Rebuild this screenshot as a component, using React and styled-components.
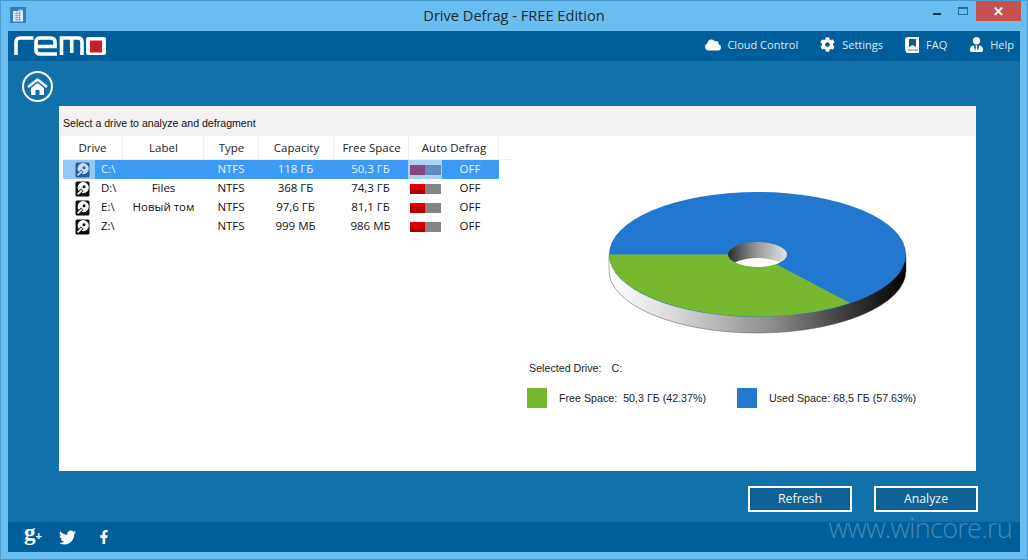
import React from "react";
import styled, { createGlobalStyle } from "styled-components";
import { FaCloud, FaCog, FaUserTie, FaTwitter, FaFacebookF } from "react-icons/fa";

const GlobalStyle = createGlobalStyle`
  html, body {
    margin: 0;
    padding: 0;
    background: #69bdf0;
  }
  * {
    box-sizing: border-box;
  }
  body {
    font-family: "Open Sans", "Noto Sans", sans-serif;
  }
`;

const Window = styled.div`
  position: relative;
  width: 1028px;
  height: 560px;
  overflow: hidden;
  background: #69bdf0;
  border: 1px solid #4a9bd0;
  display: flex;
  flex-direction: column;
`;

const TitleBar = styled.div`
  position: relative;
  height: 30px;
  flex: none;
  display: flex;
  align-items: center;
  justify-content: center;
  color: #1d2a35;
  font-size: 14.6px;
  padding-bottom: 2px;
`;

const AppIcon = styled.div`
  position: absolute;
  left: 9px;
  top: 6px;
  width: 16px;
  height: 16px;
  background: #2f7fc4;
  display: flex;
  align-items: center;
  justify-content: center;
`;

const WindowControls = styled.div`
  position: absolute;
  top: 0;
  right: 6px;
  display: flex;
  align-items: flex-start;
`;

const MinButton = styled.div`
  width: 8px;
  height: 2px;
  margin: 12px 17px 0 0;
  background: #12314a;
`;

const MaxButton = styled.div`
  width: 10px;
  height: 8px;
  margin: 6px 8px 0 0;
  border: 1px solid #2b6b9c;
  border-top-width: 2px;
`;

const CloseButton = styled.div`
  width: 45px;
  height: 20px;
  background: #c75050;
  color: #fff;
  font-size: 13px;
  font-weight: 700;
  display: flex;
  align-items: center;
  justify-content: center;
`;

const Shell = styled.div`
  flex: 1;
  margin: 0 7px 7px 7px;
  display: flex;
  flex-direction: column;
  min-height: 0;
`;

const Header = styled.header`
  height: 30px;
  flex: none;
  background: #005f9a;
  display: flex;
  align-items: center;
  justify-content: space-between;
  padding: 0 6px 0 6px;
`;

const Nav = styled.nav`
  display: flex;
  align-items: center;
  gap: 22px;
  margin-bottom: 3px;
`;

const NavItem = styled.div`
  display: flex;
  align-items: center;
  gap: ${(p) => p.$gap || 7}px;
  color: #dcebf5;
  font-size: 11px;
  svg {
    color: #fff;
    flex: none;
  }
`;

const Body = styled.main`
  flex: 1;
  background: #1271ab;
  padding: 10px 44px 0 14px;
  display: flex;
  flex-direction: column;
  min-height: 0;
`;

const HomeButton = styled.div`
  width: 31px;
  height: 31px;
  border: 2.5px solid #fff;
  border-radius: 50%;
  display: flex;
  align-items: center;
  justify-content: center;
`;

const Panel = styled.section`
  width: 917px;
  height: 365px;
  margin: 4px 0 0 37px;
  background: #fff;
  display: flex;
  flex-direction: column;
`;

const Caption = styled.div`
  height: 30px;
  flex: none;
  background: #f3f1f1;
  display: flex;
  align-items: center;
  padding: 4px 0 0 4px;
  font-family: "Liberation Sans", Arial, sans-serif;
  font-size: 10.6px;
  color: #111;
`;

const PanelRow = styled.div`
  flex: 1;
  display: flex;
  min-height: 0;
`;

const DriveTable = styled.div`
  width: 454px;
  flex: none;
  padding-left: 4px;
`;

const HeadRow = styled.div`
  display: grid;
  grid-template-columns: 60px 81px 55px 75px 75px 90px 14px;
  height: 24px;
  border-bottom: 1px solid #efefef;
`;

const HeadCell = styled.div`
  display: flex;
  align-items: center;
  justify-content: center;
  padding-left: ${(p) => (p.$first ? 0 : 1)}px;
  font-size: 11.5px;
  color: #222;
  border-right: ${(p) => (p.$last ? "none" : "1px solid #efefef")};
`;

const DriveRow = styled.div`
  display: grid;
  grid-template-columns: 32px 28px 81px 54px 75px 75px 34px 56px;
  height: 19px;
  width: 436px;
  background: ${(p) => (p.$selected ? "#3c9bf5" : "transparent")};
  color: ${(p) => (p.$selected ? "#e6f2fe" : "#111")};
  font-size: 11.5px;
`;

const IconCell = styled.div`
  display: flex;
  align-items: center;
  justify-content: flex-end;
  padding-right: 5px;
  background: ${(p) => (p.$selected ? "#92c9f8" : "transparent")};
`;

const Cell = styled.div`
  display: flex;
  align-items: center;
  justify-content: ${(p) => (p.$left ? "flex-start" : "center")};
  padding-left: ${(p) => (p.$left ? 6 : 0)}px;
  padding-bottom: 2px;
  white-space: nowrap;
`;

const ToggleCell = styled.div`
  display: flex;
  align-items: center;
  padding-left: 2px;
  background: ${(p) => (p.$selected ? "#a9d3f6" : "transparent")};
`;

const Toggle = styled.div`
  width: 31px;
  height: 10px;
  display: flex;
  background: ${(p) => (p.$selected ? "#5f8dc2" : "#858585")};
  &::before {
    content: "";
    width: 15px;
    background: ${(p) =>
      p.$selected
        ? "linear-gradient(#94457f, #7c4a86)"
        : "linear-gradient(#f00000, #a00000)"};
  }
`;

const ChartColumn = styled.div`
  flex: 1;
  display: flex;
  flex-direction: column;
  padding: 49px 0 0 16px;
  font-family: "Liberation Sans", Arial, sans-serif;
`;

const PieChart = styled.svg`
  display: block;
  margin-left: 71px;
`;

const SelectedDrive = styled.div`
  display: flex;
  gap: 10px;
  margin-top: 22px;
  font-size: 10.7px;
  color: #222;
`;

const Legend = styled.div`
  display: flex;
  margin: 14px 0 0 -2px;
`;

const LegendItem = styled.div`
  width: 210px;
  display: flex;
  align-items: center;
  gap: 12px;
  font-size: 10.7px;
  color: #222;
  white-space: pre;
`;

const Swatch = styled.div`
  width: 20px;
  height: 20px;
  background: ${(p) => p.$color};
`;

const Actions = styled.div`
  display: flex;
  justify-content: flex-end;
  gap: 22px;
  margin: 15px -2px 0 0;
`;

const ActionButton = styled.button`
  width: 104px;
  height: 26px;
  background: #0f6196;
  border: 2px solid #fff;
  color: #eef6fb;
  font-family: inherit;
  font-size: 12.3px;
  padding: 0 0 2px;
`;

const Footer = styled.footer`
  height: 30px;
  flex: none;
  background: #005f9a;
  display: flex;
  align-items: center;
  padding-left: 15px;
`;

const SocialIcon = styled.div`
  width: 36px;
  display: flex;
  color: #fff;
`;

const GooglePlus = styled(SocialIcon)`
  align-items: baseline;
  font-family: "Liberation Serif", serif;
  font-weight: 700;
  font-size: 23px;
  line-height: 20px;
  padding-left: 1px;
  margin-top: -6px;
  span {
    font-family: "Liberation Sans", sans-serif;
    font-size: 11px;
  }
`;

const Watermark = styled.div`
  position: absolute;
  right: 15px;
  bottom: 14px;
  font-size: 27px;
  font-weight: 300;
  line-height: 34px;
  letter-spacing: -0.7px;
  color: rgba(255, 255, 255, 0.27);
`;

const drives = [
  { letter: "C:\\", label: "", capacity: "118 ГБ", free: "50,3 ГБ", selected: true },
  { letter: "D:\\", label: "Files", capacity: "368 ГБ", free: "74,3 ГБ" },
  { letter: "E:\\", label: "Новый том", capacity: "97,6 ГБ", free: "81,1 ГБ" },
  { letter: "Z:\\", label: "", capacity: "999 МБ", free: "986 МБ" },
];

const columns = ["Drive", "Label", "Type", "Capacity", "Free Space", "Auto Defrag"];

const DriveIcon = ({ selected }) => {
  const dark = selected ? "#2a5c92" : "#0c0c0c";
  const light = selected ? "#c4def7" : "#fff";
  return (
    <svg width="15" height="16" viewBox="0 0 15 16">
      <rect x="0.5" y="0.5" width="14" height="15" rx="1.5" fill={dark} />
      <circle cx="8.2" cy="6.6" r="5.6" fill={light} />
      <circle cx="9" cy="5.8" r="1.5" fill={dark} />
      <path d="M2.4 13.6 L7.4 8.8" stroke={dark} strokeWidth="3.4" />
      <path d="M2.6 13.4 L7 9.2" stroke={light} strokeWidth="1.8" />
    </svg>
  );
};

const RemoLogo = () => (
  <svg width="92" height="20" viewBox="0 0 92 20">
    <g fill="none" stroke="#fff" strokeWidth="3.6">
      <path d="M2 19 V6 Q2 2 6 2 H19.5" />
      <path d="M22 10.5 H41 V6 Q41 2 37 2 H26 Q22 2 22 6 V14 Q22 18 26 18 H43" />
      <path d="M47.5 19 V2 H64 Q68 2 68 6 V19 M57.7 2 V17" />
    </g>
    <rect x="72" y="1" width="20" height="18" rx="2" fill="#fff" />
    <rect x="76" y="4.5" width="12" height="12" fill="#c4202a" />
  </svg>
);

const BookIcon = () => (
  <svg width="14" height="16" viewBox="0 0 14 16">
    <path d="M3 0 H14 V14 H3 Q0 14 0 11.5 V3 Q0 0 3 0 Z" fill="#fff" />
    <path d="M3 12 H14 V16 H3 Q0.5 16 0.5 13.5 Q0.5 12 3 12 Z" fill="#fff" />
    <path d="M4 2 H11 V10 L7.5 8 L4 10 Z" fill="#005f9a" />
    <path d="M3 13 H13" stroke="#005f9a" strokeWidth="0.8" />
  </svg>
);

const HomeIcon = () => (
  <svg width="21" height="18" viewBox="0 0 21 18">
    <path d="M1 9 L10.5 1.5 L20 9" fill="none" stroke="#fff" strokeWidth="2.4" />
    <path d="M4 10 L10.5 5 L17 10 V17 H12.5 V12 H8.5 V17 H4 Z" fill="#fff" />
  </svg>
);

const AppGlyph = () => (
  <svg width="12" height="13" viewBox="0 0 12 13">
    <rect x="1" y="2" width="10" height="10.5" fill="#dcebf7" />
    <path d="M3 4.5 H9 M3 6.5 H9 M3 8.5 H9 M3 10.5 H9 M5 2 V12.5 M7.5 2 V12.5" stroke="#6fa3cf" strokeWidth="0.7" />
    <path d="M6 2 Q9 -0.5 11 2" stroke="#dcebf7" fill="none" />
  </svg>
);

// pie with the hole, all in svg coordinates: centre 157.5/69.5, depth 16
const Pie = () => (
  <PieChart width="315" height="155" viewBox="0 0 315 155">
    <defs>
      <linearGradient id="side" x1="0" x2="1" y1="0" y2="0">
        <stop offset="0" stopColor="#ffffff" />
        <stop offset="0.2" stopColor="#dcdcdc" />
        <stop offset="0.55" stopColor="#8c8c8c" />
        <stop offset="0.8" stopColor="#3c3c3c" />
        <stop offset="1" stopColor="#000000" />
      </linearGradient>
      <linearGradient id="hole" x1="0" x2="1" y1="0" y2="0">
        <stop offset="0" stopColor="#2e2e2e" />
        <stop offset="0.5" stopColor="#9a9a9a" />
        <stop offset="1" stopColor="#e4e4e4" />
      </linearGradient>
      <clipPath id="holeClip">
        <ellipse cx="157.5" cy="69.5" rx="29.5" ry="12.5" />
      </clipPath>
    </defs>
    <path
      d="M9 69.5 V85.5 A148.5 62.5 0 0 0 306 85.5 V69.5 Z"
      fill="url(#side)"
      stroke="#555"
      strokeWidth="0.5"
    />
    <ellipse cx="157.5" cy="69.5" rx="148.5" ry="62.5" fill="#2278cf" />
    <path d="M157.5 69.5 L9 69.5 A148.5 62.5 0 0 0 250 118 Z" fill="#78b82e" />
    <ellipse cx="157.5" cy="69.5" rx="29.5" ry="12.5" fill="url(#hole)" />
    <ellipse cx="157.5" cy="85.5" rx="29.5" ry="12.5" fill="#fff" clipPath="url(#holeClip)" />
  </PieChart>
);

const App = () => (
  <>
    <GlobalStyle />
    <Window>
      <TitleBar>
        <AppIcon>
          <AppGlyph />
        </AppIcon>
        Drive Defrag - FREE Edition
        <WindowControls>
          <MinButton />
          <MaxButton />
          <CloseButton>✕</CloseButton>
        </WindowControls>
      </TitleBar>
      <Shell>
        <Header>
          <RemoLogo />
          <Nav>
            <NavItem $gap={6}>
              <FaCloud size={16} />
              Cloud Control
            </NavItem>
            <NavItem>
              <FaCog size={15} />
              Settings
            </NavItem>
            <NavItem>
              <BookIcon />
              FAQ
            </NavItem>
            <NavItem $gap={6}>
              <FaUserTie size={15} />
              Help
            </NavItem>
          </Nav>
        </Header>
        <Body>
          <HomeButton>
            <HomeIcon />
          </HomeButton>
          <Panel>
            <Caption>Select a drive to analyze and defragment</Caption>
            <PanelRow>
              <DriveTable>
                <HeadRow>
                  {columns.map((c, i) => (
                    <HeadCell key={c} $first={i === 0}>{c}</HeadCell>
                  ))}
                  <HeadCell $last />
                </HeadRow>
                {drives.map((d) => (
                  <DriveRow key={d.letter} $selected={d.selected}>
                    <IconCell $selected={d.selected}>
                      <DriveIcon selected={d.selected} />
                    </IconCell>
                    <Cell $left>{d.letter}</Cell>
                    <Cell>{d.label}</Cell>
                    <Cell>NTFS</Cell>
                    <Cell>{d.capacity}</Cell>
                    <Cell>{d.free}</Cell>
                    <ToggleCell $selected={d.selected}>
                      <Toggle $selected={d.selected} />
                    </ToggleCell>
                    <Cell>OFF</Cell>
                  </DriveRow>
                ))}
              </DriveTable>
              <ChartColumn>
                <Pie />
                <SelectedDrive>
                  <span>Selected Drive:</span>
                  <span>C:</span>
                </SelectedDrive>
                <Legend>
                  <LegendItem>
                    <Swatch $color="#78b82e" />
                    Free Space:  50,3 ГБ (42.37%)
                  </LegendItem>
                  <LegendItem>
                    <Swatch $color="#2278cf" />
                    Used Space: 68,5 ГБ (57.63%)
                  </LegendItem>
                </Legend>
              </ChartColumn>
            </PanelRow>
          </Panel>
          <Actions>
            <ActionButton>Refresh</ActionButton>
            <ActionButton>Analyze</ActionButton>
          </Actions>
        </Body>
        <Footer>
          <GooglePlus>
            g<span>+</span>
          </GooglePlus>
          <SocialIcon>
            <FaTwitter size={17} />
          </SocialIcon>
          <SocialIcon>
            <FaFacebookF size={14} style={{ marginLeft: 2 }} />
          </SocialIcon>
        </Footer>
      </Shell>
      <Watermark>www.wincore.ru</Watermark>
    </Window>
  </>
);

export default App;
